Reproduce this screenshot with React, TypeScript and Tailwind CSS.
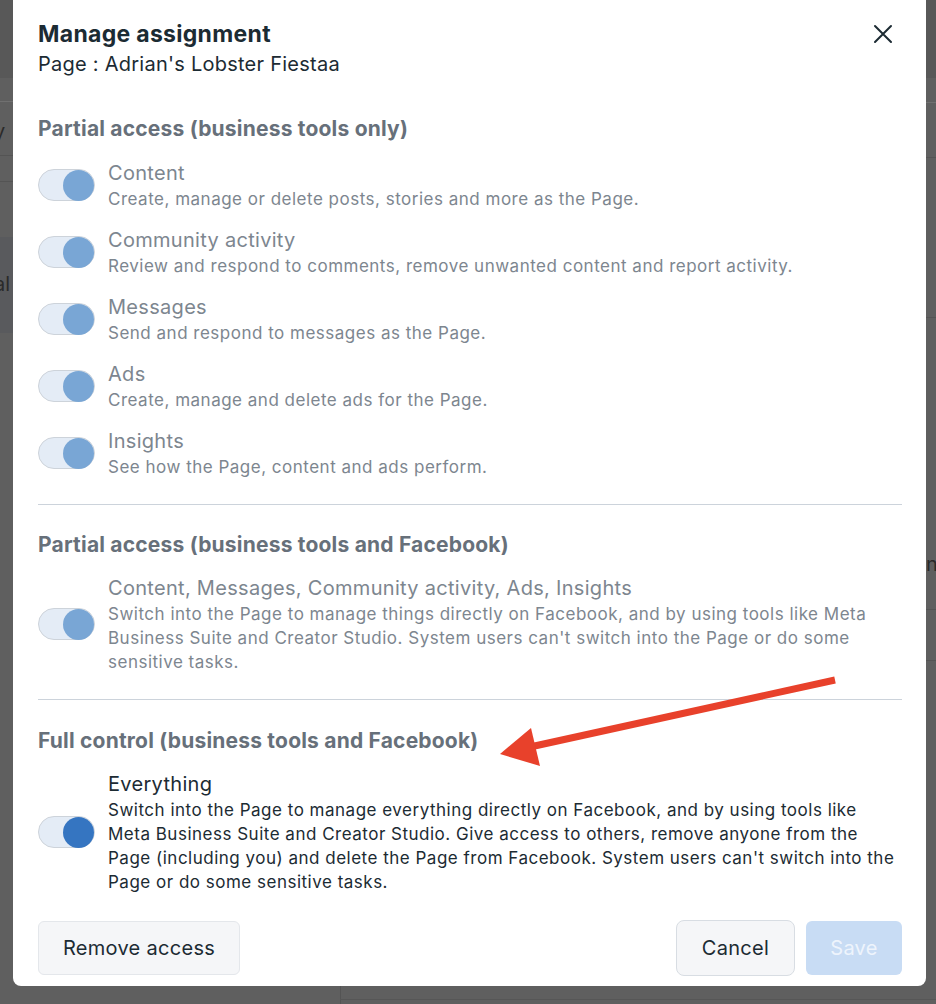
import React from "react";

const font = { fontFamily: "Inter, 'Noto Sans', sans-serif" };

function Toggle({ dark }: { dark?: boolean }) {
  return (
    <div className="relative w-[57px] h-[32px] shrink-0 rounded-full bg-[#e4ecf6] border border-[#cdd3da]">
      <div
        className={`absolute right-[0px] top-[-0.5px] w-[31px] h-[31px] rounded-full ${
          dark ? "bg-[#3575c1]" : "bg-[#79a6d5]"
        }`}
      />
    </div>
  );
}

function Row({
  title,
  desc,
  dark,
}: {
  title: string;
  desc: string;
  dark?: boolean;
}) {
  return (
    <div className="flex items-center gap-[13px]">
      <Toggle dark={dark} />
      <div className="flex flex-col">
        <div
          className={`text-[20px] leading-[28px] tracking-[0.3px] ${
            dark ? "text-[#1c2b33]" : "text-[#7d868f]"
          }`}
        >
          {title}
        </div>
        <div
          className={`text-[17px] leading-[24px] tracking-[0.5px] ${
            dark ? "text-[#1c2b33]" : "text-[#7d868f]"
          }`}
        >
          {desc}
        </div>
      </div>
    </div>
  );
}

function SectionHead({ children }: { children: React.ReactNode }) {
  return (
    <div className="text-[21px] leading-[26px] font-bold tracking-[0.2px] text-[#67707a]">
      {children}
    </div>
  );
}

export default function App() {
  return (
    <div
      className="relative w-[936px] h-[1004px] overflow-hidden bg-[#5f5f5f]"
      style={font}
    >
      {/* backdrop page hints */}
      <div className="absolute left-0 top-0 w-[13px] h-[78px] bg-[#585858]" />
      <div className="absolute left-0 top-[101px] w-[13px] h-px bg-[#707070]" />
      <div className="absolute left-0 top-[155px] w-[13px] h-px bg-[#545454]" />
      <div className="absolute left-0 top-[181px] w-[13px] h-px bg-[#545454]" />
      <div className="absolute left-0 top-[237px] w-[13px] h-[96px] bg-[#595a5d]" />
      <div className="absolute left-[-6px] top-[119px] text-[20px] leading-[24px] text-[#2a2a2a]">
        y
      </div>
      <div className="absolute left-[-6px] top-[272px] text-[20px] leading-[24px] text-[#2a2a2a]">
        al
      </div>
      <div className="absolute left-[926px] top-0 w-[10px] h-[78px] bg-[#585858]" />
      <div className="absolute left-[926px] top-[102px] w-[10px] h-px bg-[#707070]" />
      <div className="absolute left-[926px] top-[157px] w-[10px] h-px bg-[#545454]" />
      <div className="absolute left-[926px] top-[317px] w-[10px] h-px bg-[#545454]" />
      <div className="absolute left-[926px] top-[609px] w-[10px] h-px bg-[#545454]" />
      <div className="absolute left-[926px] top-[660px] w-[10px] h-px bg-[#545454]" />
      <div className="absolute left-[926px] top-[552px] text-[20px] leading-[24px] text-[#2a2a2a]">
        nt
      </div>
      <div className="absolute left-[340px] top-[986px] w-px h-[18px] bg-[#545454]" />
      <div className="absolute left-[340px] top-[999px] w-[600px] h-px bg-[#565656]" />

      {/* modal */}
      <div className="absolute left-[13px] top-[-10px] w-[913px] h-[996px] bg-white rounded-[8px] pl-[25px] pr-[24px] pt-[29px] flex flex-col">
        <div className="flex items-start justify-between">
          <div className="flex flex-col">
            <div className="text-[23px] leading-[30px] font-bold text-[#1c2b33] tracking-[0.3px]">
              Manage assignment
            </div>
            <div className="mt-[2px] text-[20px] leading-[26px] tracking-[0.25px] text-[#1c2b33]">
              Page : Adrian's Lobster Fiestaa
            </div>
          </div>
          <svg
            width="22"
            height="22"
            viewBox="0 0 22 22"
            className="mt-[4px] mr-[8px]"
          >
            <path
              d="M3 3L19 19M19 3L3 19"
              stroke="#1c2b33"
              strokeWidth="2"
              strokeLinecap="round"
            />
          </svg>
        </div>

        <div className="mt-[39px]">
          <SectionHead>Partial access (business tools only)</SectionHead>
        </div>
        <div className="mt-[17px] flex flex-col gap-[15px]">
          <Row
            title="Content"
            desc="Create, manage or delete posts, stories and more as the Page."
          />
          <Row
            title="Community activity"
            desc="Review and respond to comments, remove unwanted content and report activity."
          />
          <Row
            title="Messages"
            desc="Send and respond to messages as the Page."
          />
          <Row title="Ads" desc="Create, manage and delete ads for the Page." />
          <Row
            title="Insights"
            desc="See how the Page, content and ads perform."
          />
        </div>

        <div className="mt-[25px] h-px bg-[#ccd3db]" />

        <div className="mt-[27px]">
          <SectionHead>Partial access (business tools and Facebook)</SectionHead>
        </div>
        <div className="mt-[16px]">
          <Row
            title="Content, Messages, Community activity, Ads, Insights"
            desc="Switch into the Page to manage things directly on Facebook, and by using tools like Meta Business Suite and Creator Studio. System users can't switch into the Page or do some sensitive tasks."
          />
        </div>

        <div className="mt-[25px] h-px bg-[#ccd3db]" />

        <div className="mt-[28px]">
          <SectionHead>Full control (business tools and Facebook)</SectionHead>
        </div>
        <div className="mt-[16px]">
          <Row
            dark
            title="Everything"
            desc="Switch into the Page to manage everything directly on Facebook, and by using tools like Meta Business Suite and Creator Studio. Give access to others, remove anyone from the Page (including you) and delete the Page from Facebook. System users can't switch into the Page or do some sensitive tasks."
          />
        </div>

        <div className="mt-[26px] flex items-center justify-between">
          <button className="h-[54px] w-[202px] rounded-[6px] bg-[#f5f6f8] border border-[#e4e7eb] text-[20px] tracking-[0.3px] text-[#1c2b33]">
            Remove access
          </button>
          <div className="flex items-center gap-[11px]">
            <button className="h-[56px] w-[119px] rounded-[8px] bg-[#f5f6f8] border border-[#d8dde3] text-[20px] tracking-[0.3px] text-[#1c2b33]">
              Cancel
            </button>
            <button className="h-[54px] w-[96px] rounded-[6px] bg-[#c8dcf4] text-[20px] tracking-[0.3px] text-[#eef4fc]">
              Save
            </button>
          </div>
        </div>
      </div>

      {/* red annotation arrow */}
      <svg
        className="absolute left-0 top-0 pointer-events-none"
        width="936"
        height="1004"
        viewBox="0 0 936 1004"
      >
        <line
          x1="835"
          y1="680"
          x2="530"
          y2="747"
          stroke="#e8412b"
          strokeWidth="7"
        />
        <polygon points="500,754 531,728 540,766" fill="#e8412b" />
      </svg>
    </div>
  );
}
